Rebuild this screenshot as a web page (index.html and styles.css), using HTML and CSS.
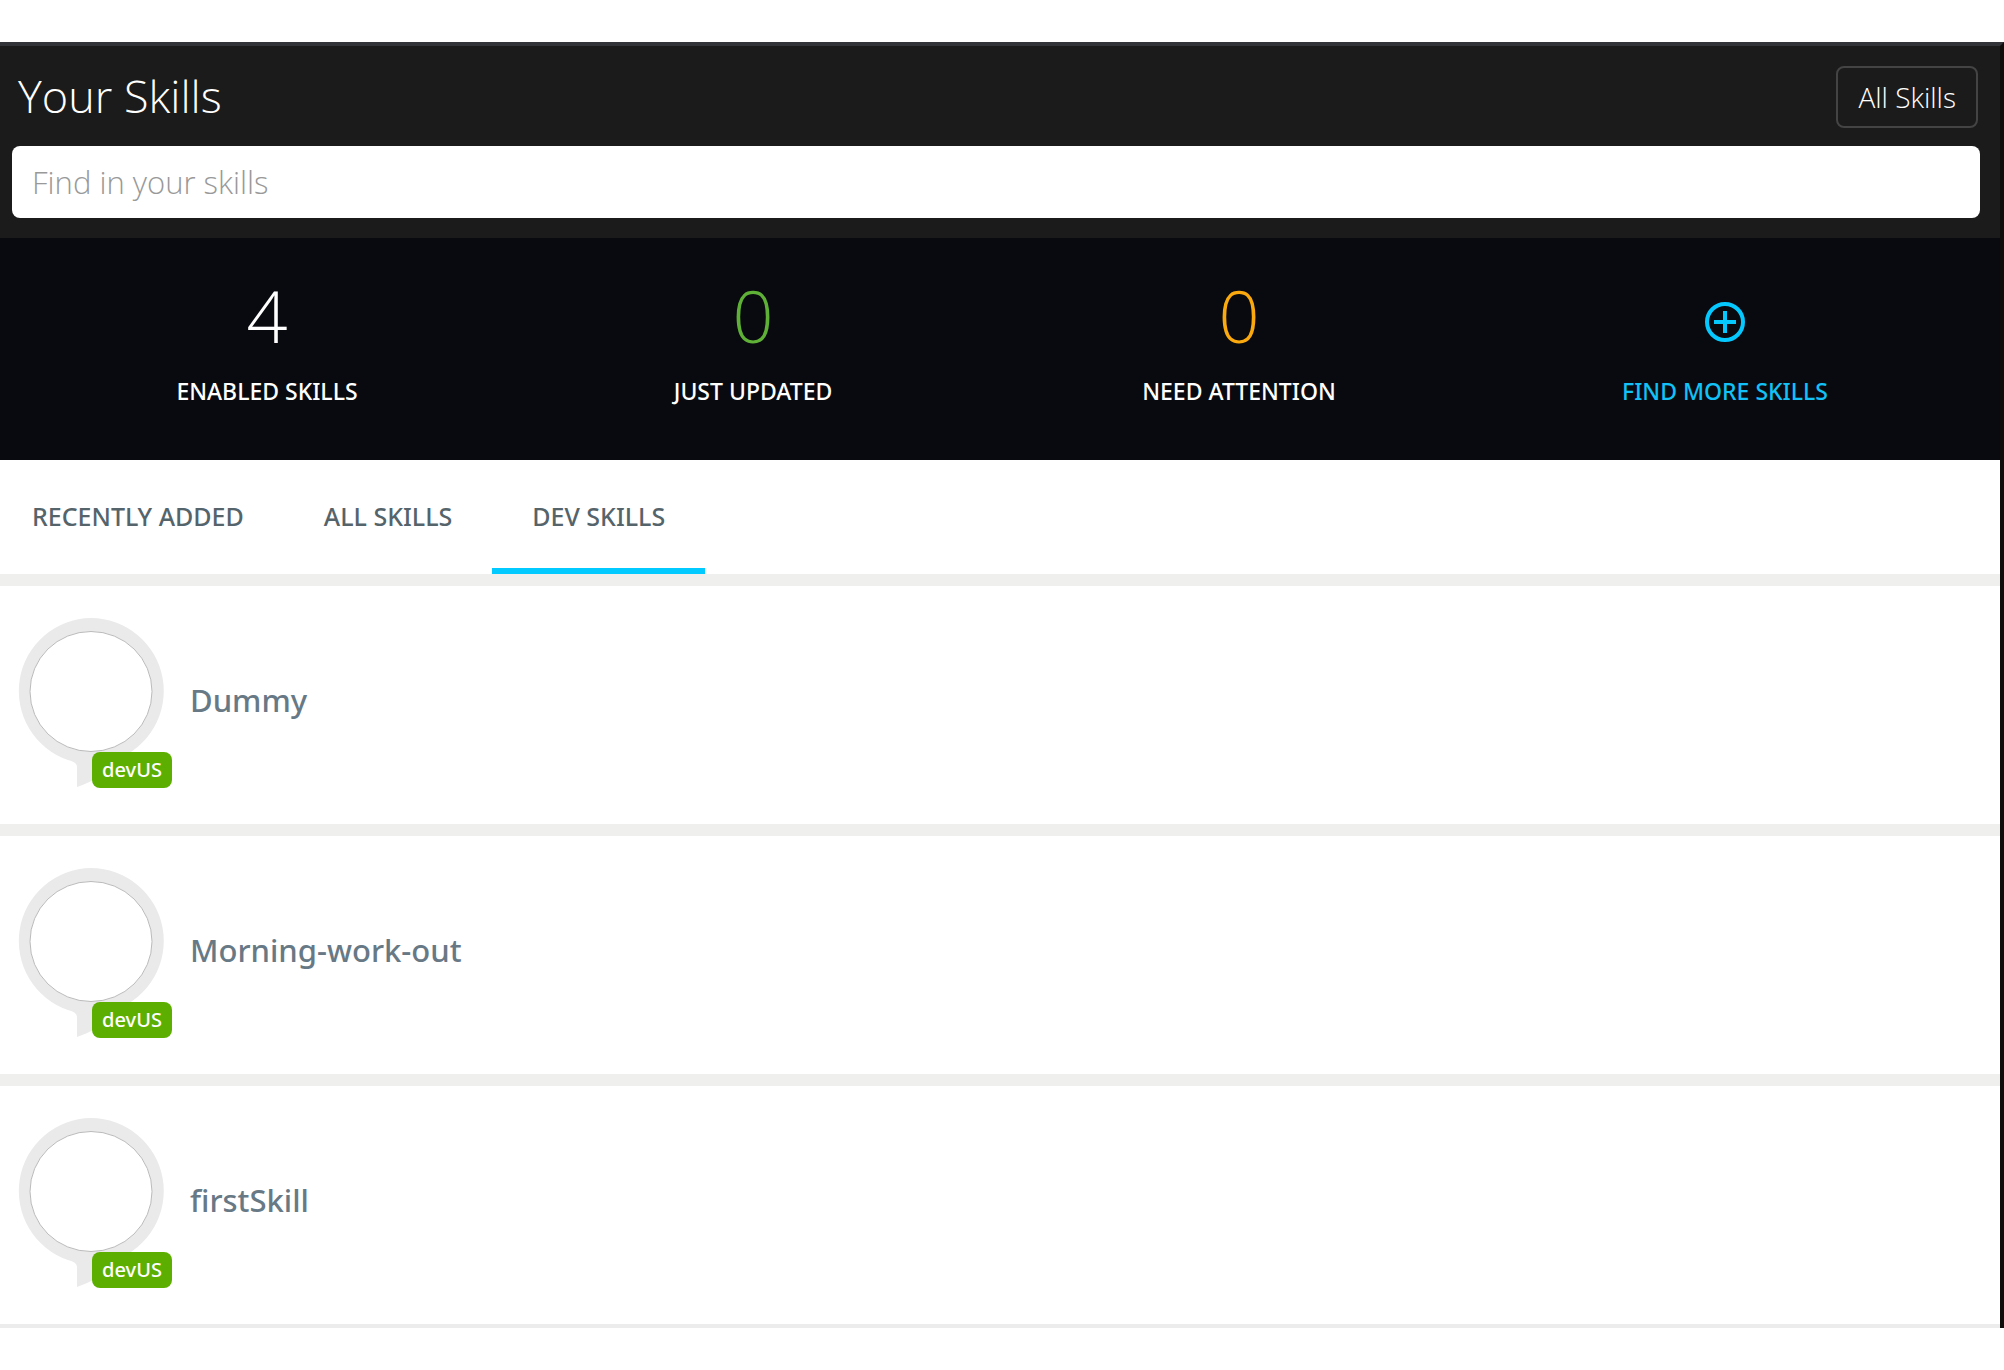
FILE: index.html
```html
<!DOCTYPE html>
<html lang="en">
<head>
<meta charset="utf-8">
<title>Your Skills</title>
<link rel="stylesheet" href="styles.css">
</head>
<body>
<div class="app">
  <header class="header">
    <div class="header-row">
      <h1 class="title">Your Skills</h1>
      <button class="all-button" type="button">All Skills</button>
    </div>
    <input class="search" type="search" placeholder="Find in your skills" aria-label="Find in your skills">
  </header>
  <section class="stats">
    <div class="stat"><span class="count">4</span><span class="label">ENABLED SKILLS</span></div>
    <div class="stat"><span class="count updated">0</span><span class="label">JUST UPDATED</span></div>
    <div class="stat"><span class="count attention">0</span><span class="label">NEED ATTENTION</span></div>
    <a class="stat more" href="#">
      <span class="count"><svg class="plus" viewBox="0 0 42 42" aria-hidden="true"><circle cx="21" cy="21" r="18"/><path d="M21 10v22M10 21h22"/></svg></span>
      <span class="label">FIND MORE SKILLS</span>
    </a>
  </section>
  <nav class="tabs">
    <a class="tab" href="#">RECENTLY ADDED</a>
    <a class="tab" href="#">ALL SKILLS</a>
    <a class="tab active" href="#" aria-current="page">DEV SKILLS</a>
  </nav>
  <ul class="list">
    <li class="skill">
      <div class="icon"><svg class="bubble" viewBox="0 0 146 170" aria-hidden="true"><path class="ring" d="M73 0a73 73 0 0 1 25 141.500Q88 159 59 169V149Q59 144 50 142A73 73 0 0 1 73 0z"/><ellipse class="hole" cx="73" cy="73.500" rx="61" ry="60"/></svg><span class="badge">devUS</span></div>
      <h2 class="name">Dummy</h2>
    </li>
    <li class="skill">
      <div class="icon"><svg class="bubble" viewBox="0 0 146 170" aria-hidden="true"><path class="ring" d="M73 0a73 73 0 0 1 25 141.500Q88 159 59 169V149Q59 144 50 142A73 73 0 0 1 73 0z"/><ellipse class="hole" cx="73" cy="73.500" rx="61" ry="60"/></svg><span class="badge">devUS</span></div>
      <h2 class="name">Morning-work-out</h2>
    </li>
    <li class="skill">
      <div class="icon"><svg class="bubble" viewBox="0 0 146 170" aria-hidden="true"><path class="ring" d="M73 0a73 73 0 0 1 25 141.500Q88 159 59 169V149Q59 144 50 142A73 73 0 0 1 73 0z"/><ellipse class="hole" cx="73" cy="73.500" rx="61" ry="60"/></svg><span class="badge">devUS</span></div>
      <h2 class="name">firstSkill</h2>
    </li>
  </ul>
</div>
</body>
</html>
```
FILE: styles.css
```css
* { box-sizing: border-box; }
body {
  margin: 0;
  padding-top: 42px;
  background: #fff;
  font-family: "Noto Sans", "Open Sans", sans-serif;
}
.app {
  border-top: 4px solid #323338;
  border-right: 4px solid #0e0d0b;
}
.header {
  display: flex;
  flex-direction: column;
  gap: 18px;
  padding: 20px 20px 20px 12px;
  background: #1b1b1b;
}
.header-row {
  display: flex;
  align-items: flex-start;
  justify-content: space-between;
  padding: 0 2px 0 6px;
}
.title {
  margin: 0;
  color: #fff;
  font-family: "Open Sans", sans-serif;
  font-size: 45px;
  font-weight: 350;
  line-height: 60px;
}
.all-button {
  height: 62px;
  padding: 0 20px;
  border: 2px solid #444;
  border-radius: 8px;
  background: transparent;
  color: #fff;
  font: 350 28px "Open Sans", sans-serif;
}
.search {
  width: 100%;
  height: 72px;
  padding: 0 20px;
  border: 0;
  border-radius: 8px;
  background: #fff;
  font: 350 31px "Open Sans", sans-serif;
}
.search::placeholder { color: #999; opacity: 1; }
.stats {
  display: grid;
  grid-template-columns: repeat(4, 1fr);
  padding: 37px 32px 53px 24px;
  background: #090a0f;
}
.stat {
  display: flex;
  flex-direction: column;
  align-items: center;
  gap: 20px;
  color: #fff;
  text-decoration: none;
}
.count {
  display: flex;
  align-items: center;
  height: 80px;
  font-family: "Open Sans", sans-serif;
  font-size: 72px;
  font-weight: 350;
  line-height: 80px;
}
.updated { color: #5eb136; }
.attention { color: #faa90e; }
.label {
  font-size: 23px;
  font-weight: 500;
  line-height: 32px;
}
.more { color: #12c1f5; }
.plus {
  width: 42px;
  height: 42px;
  margin-top: 14px;
  fill: none;
  stroke: #05c8ff;
  stroke-width: 4;
}
.tabs {
  display: flex;
  height: 114px;
  background: #fff;
}
.tab {
  padding: 38px 40px 0;
  border-bottom: 6px solid transparent;
  color: #55646b;
  font-size: 25px;
  font-weight: 500;
  line-height: 36px;
  text-decoration: none;
}
.tab:first-child { padding-left: 32px; }
.active { border-color: #00caff; }
.list {
  margin: 0;
  padding: 0;
  border-bottom: 4px solid #ececec;
  list-style: none;
}
.skill {
  display: flex;
  align-items: flex-start;
  gap: 18px;
  height: 250px;
  padding: 32px 18px 0;
  border-top: 12px solid #efefee;
}
.icon {
  position: relative;
  width: 154px;
  height: 170px;
}
.bubble { display: block; width: 146px; height: 170px; }
.ring { fill: #eaeaea; }
.hole { fill: #fff; stroke: #bbb; }
.badge {
  position: absolute;
  right: 0;
  bottom: 0;
  width: 80px;
  border-radius: 8px;
  background: #5caf00;
  color: #fff;
  font-size: 20px;
  font-weight: 500;
  line-height: 36px;
  text-align: center;
}
.name {
  margin: 0;
  color: #687986;
  font-size: 31px;
  font-weight: 500;
  line-height: 164px;
}
```
